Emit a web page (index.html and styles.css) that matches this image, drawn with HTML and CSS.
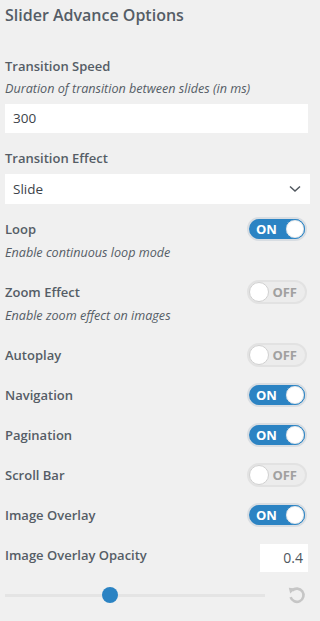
FILE: index.html
```html
<!DOCTYPE html>
<html>
<head>
<meta charset="utf-8">
<link rel="stylesheet" href="styles.css">
</head>
<body>
<div class="panel">
  <h2 class="title">Slider Advance Options</h2>

  <div class="field f-speed">
    <div class="label">Transition Speed</div>
    <div class="desc">Duration of transition between slides (in ms)</div>
    <div class="input">300</div>
  </div>

  <div class="field f-effect">
    <div class="label">Transition Effect</div>
    <div class="select">
      <span>Slide</span>
      <svg class="chev" width="12" height="8" viewBox="0 0 12 8"><path d="M1 1.5 L6 6 L11 1.5" fill="none" stroke="#50575e" stroke-width="1.5"/></svg>
    </div>
  </div>

  <div class="field f-desc">
    <div class="row"><span class="label">Loop</span><span class="toggle on"><span class="t-text">ON</span><span class="knob"></span></span></div>
    <div class="desc under">Enable continuous loop mode</div>
  </div>

  <div class="field f-desc">
    <div class="row"><span class="label">Zoom Effect</span><span class="toggle off"><span class="knob"></span><span class="t-text">OFF</span></span></div>
    <div class="desc under">Enable zoom effect on images</div>
  </div>

  <div class="field f-row">
    <div class="row"><span class="label">Autoplay</span><span class="toggle off"><span class="knob"></span><span class="t-text">OFF</span></span></div>
  </div>
  <div class="field f-row">
    <div class="row"><span class="label">Navigation</span><span class="toggle on"><span class="t-text">ON</span><span class="knob"></span></span></div>
  </div>
  <div class="field f-row">
    <div class="row"><span class="label">Pagination</span><span class="toggle on"><span class="t-text">ON</span><span class="knob"></span></span></div>
  </div>
  <div class="field f-row">
    <div class="row"><span class="label">Scroll Bar</span><span class="toggle off"><span class="knob"></span><span class="t-text">OFF</span></span></div>
  </div>
  <div class="field f-row last">
    <div class="row"><span class="label">Image Overlay</span><span class="toggle on"><span class="t-text">ON</span><span class="knob"></span></span></div>
  </div>

  <div class="field f-opacity">
    <div class="row op-row"><span class="label">Image Overlay Opacity</span><span class="num">0.4</span></div>
    <div class="slider-row">
      <div class="track"><span class="thumb"></span></div>
      <svg class="reset" width="20" height="20" viewBox="0 0 20 20">
        <path d="M5.2 5.6 A6.6 6.6 0 1 1 3.6 12.2" fill="none" stroke="#c6c6c6" stroke-width="2.6"/>
        <path d="M1.8 2.8 L8.6 3.4 L3.2 8.6 Z" fill="#c6c6c6"/>
      </svg>
    </div>
  </div>
</div>
</body>
</html>
```

FILE: styles.css
```css
html, body {
  margin: 0;
  padding: 0;
  background: #f0f0f0;
}
body {
  font-family: "Open Sans", "Noto Sans", sans-serif;
  color: #555d66;
}
.panel {
  width: 303px;
  padding: 4px 3px 0 5px;
}
.title {
  margin: 0;
  font-size: 16px;
  line-height: 22px;
  font-weight: 600;
  color: #555d66;
}
.label {
  font-size: 13px;
  line-height: 20px;
  font-weight: 600;
  color: #555d66;
}
.desc {
  font-size: 12.6px;
  line-height: 18px;
  font-style: italic;
  color: #555d66;
  margin-top: 4px;
}
.desc.under {
  margin-top: 3px;
}
.f-speed {
  margin-top: 30px;
}
.input {
  margin-top: 6px;
  height: 29px;
  box-sizing: border-box;
  background: #fff;
  padding: 0 8px;
  font-size: 13.5px;
  line-height: 29px;
  color: #3c434a;
}
.f-effect {
  margin-top: 15px;
}
.select {
  margin-top: 6px;
  margin-right: -2px;
  height: 30px;
  box-sizing: border-box;
  background: #fff;
  padding: 0 8px;
  font-size: 13.5px;
  line-height: 30px;
  color: #3c434a;
  display: flex;
  justify-content: space-between;
  align-items: center;
}
.chev {
  margin-right: 1px;
}
.f-effect + .f-desc {
  margin-top: 13px;
}
.f-desc + .f-desc {
  margin-top: 18px;
}
.f-desc + .f-row {
  margin-top: 18px;
}
.f-row + .f-row {
  margin-top: 16px;
}
.row {
  display: flex;
  justify-content: space-between;
  align-items: center;
  height: 24px;
}
.toggle {
  width: 60px;
  height: 24px;
  box-sizing: border-box;
  border-radius: 12px;
  border: 2px solid #dadada;
  display: flex;
  align-items: center;
  justify-content: space-between;
  font-size: 13px;
  font-weight: 700;
  margin-right: 1px;
}
.toggle.on {
  background: #2b83c3;
  color: #fff;
  padding: 0 0 0 7px;
  border-color: #d8dde2;
}
.toggle.off {
  background: #ececec;
  color: #a0a0a0;
  padding: 0 8px 0 0;
  border-color: #e2e2e2;
}
.knob {
  width: 20px;
  height: 20px;
  box-sizing: border-box;
  border-radius: 50%;
  background: #fff;
  border: 1px solid #d0d0d0;
}
.toggle.on .knob {
  border-color: #2b83c3;
  background: #fff;
  box-shadow: inset 0 0 0 1px #e8e8e8;
}
.t-text {
  line-height: 20px;
}
.f-opacity {
  margin-top: 17px;
}
.op-row {
  height: 28px;
  align-items: flex-start;
}
.op-row .label {
  margin-top: 1px;
}
.num {
  width: 48px;
  height: 28px;
  box-sizing: border-box;
  background: #fff;
  text-align: right;
  padding-right: 5px;
  font-size: 14px;
  line-height: 28px;
  color: #50575e;
}
.slider-row {
  margin-top: 13px;
  display: flex;
  align-items: center;
  justify-content: space-between;
  height: 20px;
}
.track {
  position: relative;
  width: 260px;
  height: 3px;
  background: #e4e4e4;
}
.thumb {
  position: absolute;
  left: 97px;
  top: -7px;
  width: 16px;
  height: 16px;
  border-radius: 50%;
  background: #2b83c3;
}
.reset {
  margin-right: 1px;
}
```
